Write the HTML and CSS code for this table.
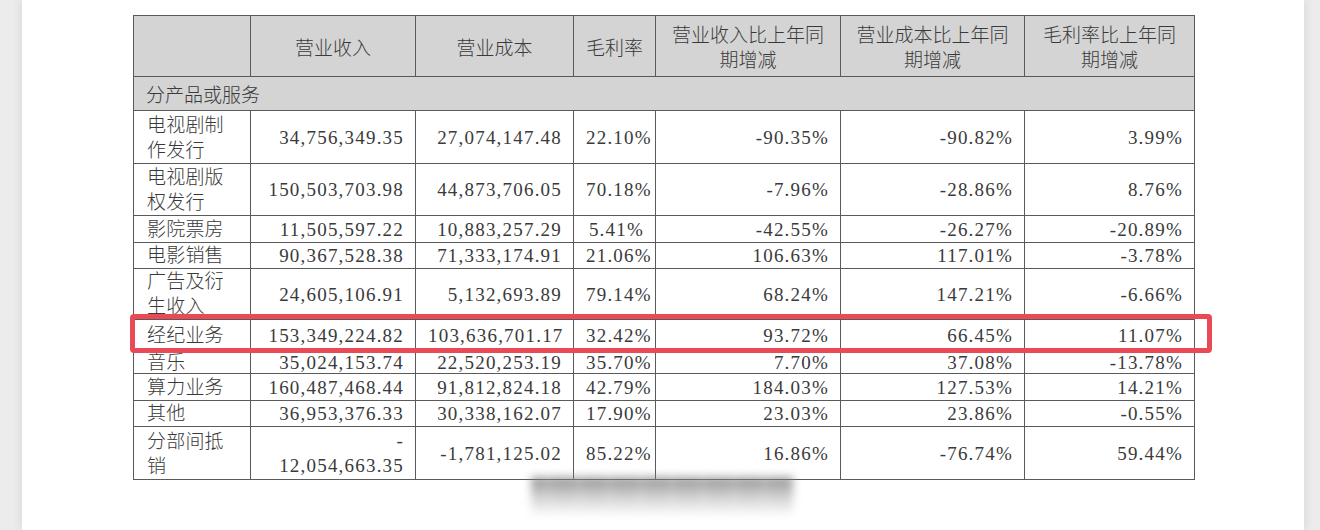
FILE: index.html
```html
<!DOCTYPE html>
<html lang="zh-CN">
<head>
<meta charset="utf-8">
<title>分产品或服务</title>
<link rel="stylesheet" href="styles.css">
</head>
<body>
<div class="page">
  <div class="sheet">
    <table class="report">
      <colgroup>
        <col class="c-name"><col class="c-rev"><col class="c-cost"><col class="c-gm">
        <col class="c-chg1"><col class="c-chg2"><col class="c-chg3">
      </colgroup>
      <thead>
        <tr class="h-head">
          <th></th>
          <th>营业收入</th>
          <th>营业成本</th>
          <th>毛利率</th>
          <th>营业收入比上年同<br>期增减</th>
          <th>营业成本比上年同<br>期增减</th>
          <th>毛利率比上年同<br>期增减</th>
        </tr>
      </thead>
      <tbody>
        <tr class="h-section"><td colspan="7" class="section">分产品或服务</td></tr>
        <tr class="h-53">
          <td class="name">电视剧制<br>作发行</td>
          <td class="num">34,756,349.35</td><td class="num">27,074,147.48</td><td class="num">22.10%</td>
          <td class="num">-90.35%</td><td class="num">-90.82%</td><td class="num">3.99%</td>
        </tr>
        <tr class="h-52">
          <td class="name">电视剧版<br>权发行</td>
          <td class="num">150,503,703.98</td><td class="num">44,873,706.05</td><td class="num">70.18%</td>
          <td class="num">-7.96%</td><td class="num">-28.86%</td><td class="num">8.76%</td>
        </tr>
        <tr class="h-27">
          <td class="name">影院票房</td>
          <td class="num">11,505,597.22</td><td class="num">10,883,257.29</td><td class="num">5.41%</td>
          <td class="num">-42.55%</td><td class="num">-26.27%</td><td class="num">-20.89%</td>
        </tr>
        <tr class="h-26">
          <td class="name">电影销售</td>
          <td class="num">90,367,528.38</td><td class="num">71,333,174.91</td><td class="num">21.06%</td>
          <td class="num">106.63%</td><td class="num">117.01%</td><td class="num">-3.78%</td>
        </tr>
        <tr class="h-50">
          <td class="name">广告及衍<br>生收入</td>
          <td class="num">24,605,106.91</td><td class="num">5,132,693.89</td><td class="num">79.14%</td>
          <td class="num">68.24%</td><td class="num">147.21%</td><td class="num">-6.66%</td>
        </tr>
        <tr class="h-32">
          <td class="name">经纪业务</td>
          <td class="num">153,349,224.82</td><td class="num">103,636,701.17</td><td class="num">32.42%</td>
          <td class="num">93.72%</td><td class="num">66.45%</td><td class="num">11.07%</td>
        </tr>
        <tr class="h-22">
          <td class="name">音乐</td>
          <td class="num">35,024,153.74</td><td class="num">22,520,253.19</td><td class="num">35.70%</td>
          <td class="num">7.70%</td><td class="num">37.08%</td><td class="num">-13.78%</td>
        </tr>
        <tr class="h-27">
          <td class="name">算力业务</td>
          <td class="num">160,487,468.44</td><td class="num">91,812,824.18</td><td class="num">42.79%</td>
          <td class="num">184.03%</td><td class="num">127.53%</td><td class="num">14.21%</td>
        </tr>
        <tr class="h-26">
          <td class="name">其他</td>
          <td class="num">36,953,376.33</td><td class="num">30,338,162.07</td><td class="num">17.90%</td>
          <td class="num">23.03%</td><td class="num">23.86%</td><td class="num">-0.55%</td>
        </tr>
        <tr class="h-50 last">
          <td class="name">分部间抵<br>销</td>
          <td class="num">-<br>12,054,663.35</td><td class="num">-1,781,125.02</td><td class="num">85.22%</td>
          <td class="num">16.86%</td><td class="num">-76.74%</td><td class="num">59.44%</td>
        </tr>
      </tbody>
    </table>
    <div class="highlight"></div>
    <div class="smudge"></div>
  </div>
</div>
</body>
</html>
```

FILE: styles.css
```css
* { box-sizing: border-box; }

html, body {
  margin: 0;
  padding: 0;
  background: #ececec;
}

body {
  width: 1320px;
  height: 530px;
  overflow: hidden;
  font-family: "Liberation Serif", "Noto Sans CJK SC", serif;
  font-weight: 300;
  color: #3a3a3a;
}

.page {
  margin-left: 22px;
  width: 1282px;
  height: 530px;
  background: #ffffff;
  box-shadow: -4px 0 8px rgba(0, 0, 0, 0.05), 4px 0 8px rgba(0, 0, 0, 0.05);
  padding: 15px 0 0 111px;
}

.sheet {
  position: relative;
  width: 1061px;
}

.report {
  border-collapse: collapse;
  table-layout: fixed;
  width: 1061px;
  font-size: 19px;
}

.c-name { width: 117px; }
.c-rev { width: 165px; }
.c-cost { width: 158px; }
.c-gm { width: 82px; }
.c-chg1 { width: 185px; }
.c-chg2 { width: 184px; }
.c-chg3 { width: 170px; }

.report th,
.report td {
  border: 1px solid #5a5a5a;
  padding: 0 11px 0 12px;
  vertical-align: middle;
  white-space: nowrap;
  overflow: hidden;
}

.report th {
  background: #d4d4d4;
  font-weight: 300;
  text-align: center;
  line-height: 25px;
  padding: 4px 4px 0;
}

.h-head { height: 61px; }
.h-section { height: 34px; }
.h-53 { height: 53px; }
.h-52 { height: 52px; }
.h-50 { height: 50px; }
.h-32 { height: 32px; }
.h-27 { height: 27px; }
.h-26 { height: 26px; }
.h-22 { height: 22px; }

.report td {
  line-height: 25px;
}

.h-22 td {
  line-height: 20px;
}

.section {
  background: #d4d4d4;
  text-align: left;
  padding: 4px 0 0 12px !important;
}

.name {
  text-align: left;
  padding-left: 13px !important;
  vertical-align: top !important;
  letter-spacing: 0.2px;
}

.h-27 .name,
.h-26 .name,
.h-22 .name,
.h-32 .name {
  vertical-align: middle !important;
}

.h-53 .name { padding-top: 2px; }
.h-52 .name { padding-top: 1px; }
.last .name { padding-top: 2px; }

.num {
  text-align: right;
  letter-spacing: 1.2px;
}

.highlight {
  position: absolute;
  left: -3px;
  top: 299px;
  width: 1082px;
  height: 39px;
  border: 5px solid #ea4a55;
  border-radius: 4px;
  pointer-events: none;
}

.smudge {
  position: absolute;
  left: 398px;
  top: 462px;
  width: 262px;
  height: 38px;
  background:
    repeating-linear-gradient(to right, rgba(255,255,255,0) 0 14px, rgba(255,255,255,0.12) 14px 20px, rgba(255,255,255,0) 20px 31px),
    linear-gradient(to bottom, rgba(120,120,120,0.8), rgba(170,170,170,0.5) 55%, rgba(225,225,225,0.12));
  filter: blur(4px);
}
```
